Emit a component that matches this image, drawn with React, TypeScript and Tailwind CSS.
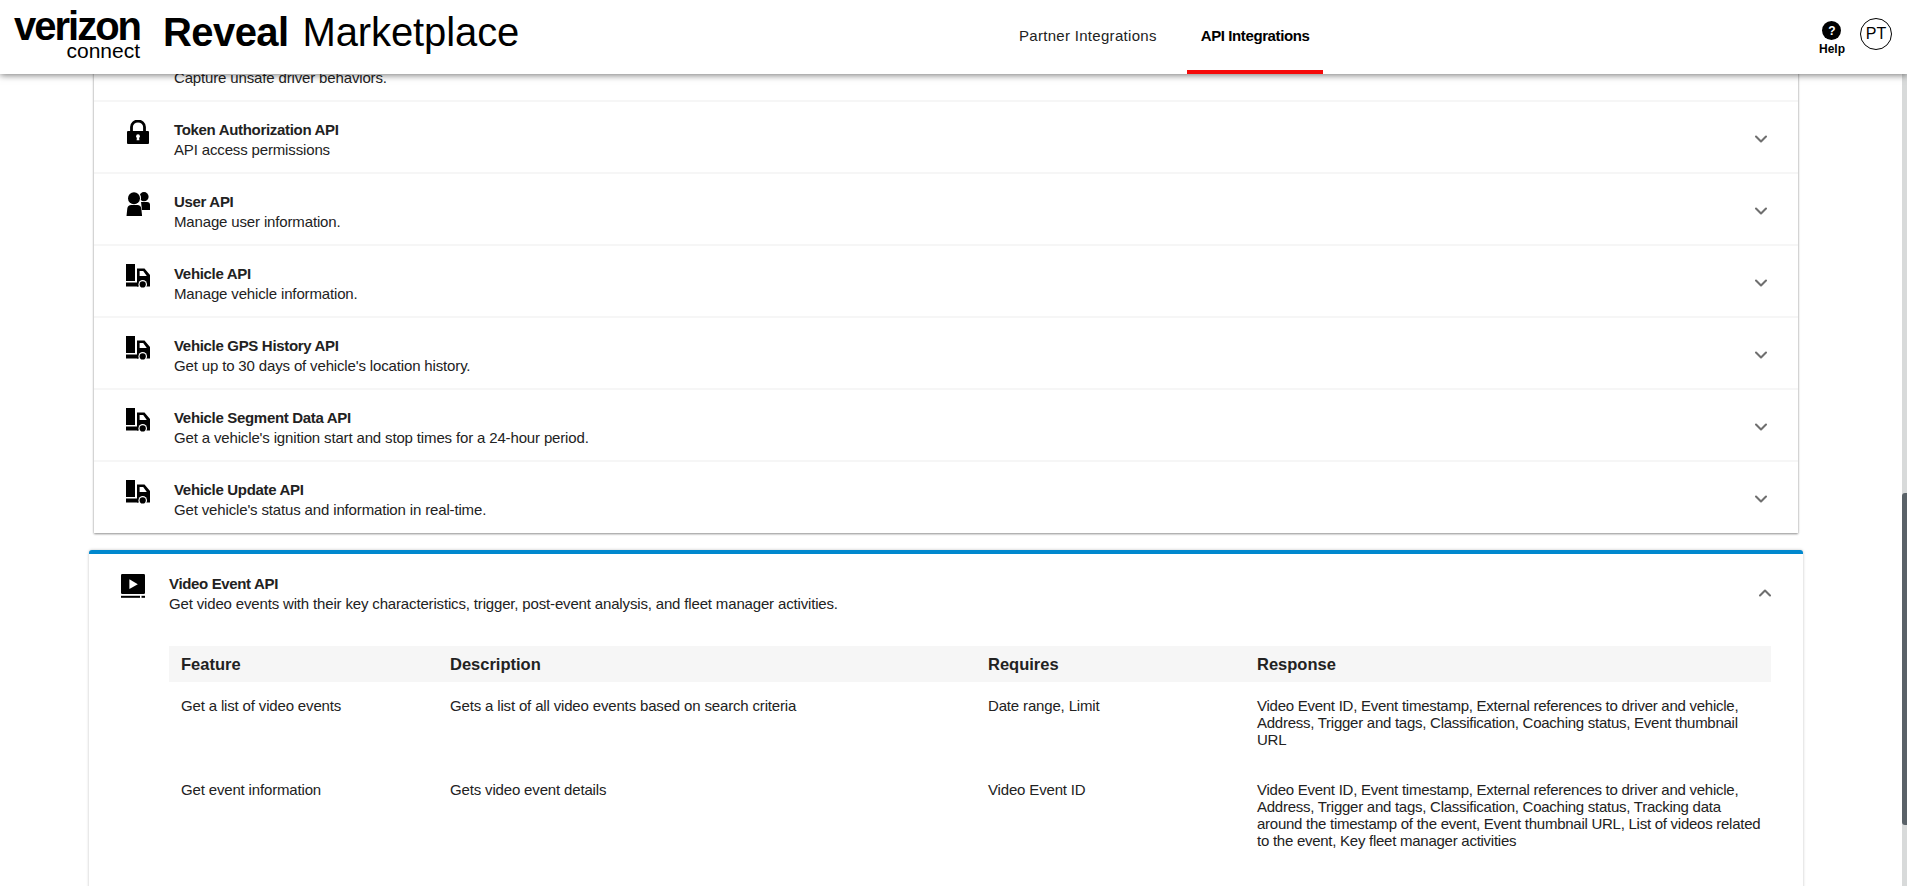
import React from 'react';
import { ChevronDown, ChevronUp } from 'lucide-react';

const LockIcon = () => (
  <svg viewBox="0 0 24 24" className="w-6 h-6" fill="black">
    <path d="M5.5 12V7a6.5 6 0 0 1 13 0V12" fill="none" stroke="black" strokeWidth="2.8" />
    <rect x="1" y="11" width="22" height="13" rx="1" />
    <circle cx="12" cy="16.2" r="1.9" fill="white" />
    <path d="M11 17h2l.4 3.2h-2.8z" fill="white" />
  </svg>
);

const UserIcon = () => (
  <svg viewBox="0 0 24 25" className="w-6 h-[25px] -mt-[1px]" fill="black">
    <circle cx="18" cy="5.7" r="4.6" />
    <path d="M15 11h6a3 3 0 0 1 3 3v5h-8z" />
    <circle cx="8" cy="7.3" r="7" fill="white" />
    <circle cx="8" cy="7.3" r="6" />
    <path d="M0.5 25l0.8-7.5a4 4 0 0 1 4-3.5h6a4 4 0 0 1 4 3.5l0.8 7.5z" />
  </svg>
);

const TruckIcon = () => (
  <svg viewBox="0 0 24 24" className="w-6 h-6" fill="black">
    <rect x="0" y="0" width="9" height="17" />
    <rect x="0" y="18.5" width="12" height="4" />
    <path
      fillRule="evenodd"
      d="M11 4.5h7.5l5.5 6.5v11.5H11zM13.6 7v5h7.2l-3.6-5z"
    />
    <circle cx="16.7" cy="20.4" r="4.3" fill="white" />
    <circle cx="16.7" cy="20.4" r="3.1" />
  </svg>
);

const VideoIcon = () => (
  <svg viewBox="0 0 24 24" className="w-6 h-6" fill="black">
    <rect x="0" y="0" width="24" height="20" rx="1.2" />
    <path d="M8.4 5.3L16.8 10.2L8.4 15z" fill="white" />
    <rect x="0" y="21.8" width="19" height="2" />
    <rect x="20.5" y="21.8" width="3.5" height="2" />
  </svg>
);

const apiRows = [
  { icon: <LockIcon />, name: 'Token Authorization API', desc: 'API access permissions' },
  { icon: <UserIcon />, name: 'User API', desc: 'Manage user information.' },
  { icon: <TruckIcon />, name: 'Vehicle API', desc: 'Manage vehicle information.' },
  { icon: <TruckIcon />, name: 'Vehicle GPS History API', desc: "Get up to 30 days of vehicle's location history." },
  { icon: <TruckIcon />, name: 'Vehicle Segment Data API', desc: "Get a vehicle's ignition start and stop times for a 24-hour period." },
  { icon: <TruckIcon />, name: 'Vehicle Update API', desc: "Get vehicle's status and information in real-time." },
];

const videoFeatures = [
  {
    feature: 'Get a list of video events',
    description: 'Gets a list of all video events based on search criteria',
    requires: 'Date range, Limit',
    response:
      'Video Event ID, Event timestamp, External references to driver and vehicle, Address, Trigger and tags, Classification, Coaching status, Event thumbnail URL',
  },
  {
    feature: 'Get event information',
    description: 'Gets video event details',
    requires: 'Video Event ID',
    response:
      'Video Event ID, Event timestamp, External references to driver and vehicle, Address, Trigger and tags, Classification, Coaching status, Tracking data around the timestamp of the event, Event thumbnail URL, List of videos related to the event, Key fleet manager activities',
  },
];

const App: React.FC = () => {
  return (
    <div className="h-[886px] w-full overflow-hidden flex flex-col bg-white text-[#222] font-['Liberation_Sans',Arial,sans-serif]">
      {/* Header */}
      <header className="relative z-10 h-[74px] shrink-0 flex bg-white shadow-[0_1px_7px_rgba(0,0,0,0.55)]">
        <div className="w-[1005px] shrink-0 flex items-start pl-[14px] text-black">
          <div className="flex flex-col items-end pt-[10px]">
            <span className="text-[40px] leading-[32px] font-bold tracking-[-2px]">verizon</span>
            <span className="text-[21px] leading-[18px]">connect</span>
          </div>
          <div className="ml-[23px] pt-[9px] text-[40px] leading-[46px] whitespace-nowrap">
            <span className="font-bold tracking-[-0.6px]">Reveal</span>
            <span className="ml-[14px] tracking-[-0.1px]">Marketplace</span>
          </div>
        </div>

        <nav className="flex text-[15px] gap-4">
          <a className="px-[14px] pt-[26px] leading-[20px] tracking-[0.3px] whitespace-nowrap">Partner Integrations</a>
          <a className="px-[14px] pt-[26px] leading-[20px] tracking-[-0.4px] font-bold whitespace-nowrap text-black border-b-4 border-[#f50a0a]">
            API Integrations
          </a>
        </nav>

        <div className="ml-auto flex items-start pr-[15px] pt-[18px] text-black">
          <div className="flex flex-col items-center mr-[15px] pt-[3px]">
            <div className="w-[19px] h-[19px] rounded-full bg-black flex items-center justify-center text-white text-[12px] leading-none font-bold">
              ?
            </div>
            <span className="text-[12px] leading-[16px] mt-[1px] font-bold">Help</span>
          </div>
          <div className="w-8 h-8 rounded-full border border-black flex items-center justify-center text-[16px]">
            PT
          </div>
        </div>
      </header>

      <div className="flex flex-1 min-h-0">
        <main className="flex-1 min-w-0 overflow-hidden pl-[89px] pr-[99px]">
          {/* API list */}
          <section className="mx-[5px] -mt-[6px] pb-[1px] bg-white shadow-[0_1px_2px_rgba(0,0,0,0.4),0_0_3px_rgba(0,0,0,0.12)]">
            <div className="pl-[80px] pb-[12px] text-[15px] leading-[20px] tracking-[-0.15px]">Capture unsafe driver behaviors.</div>
            {apiRows.map((row) => (
              <div key={row.name} className="h-[72px] flex items-center border-t-2 border-[#f6f6f6] pl-[32px] pr-[27px]">
                <div className="w-[24px] mr-[24px] self-start pt-[18px]">{row.icon}</div>
                <div className="self-start pt-[18px] flex-1 min-w-0 text-[15px] leading-[20px]">
                  <div className="font-bold tracking-[-0.32px]">{row.name}</div>
                  <div className="tracking-[-0.15px]">{row.desc}</div>
                </div>
                <ChevronDown size={20} strokeWidth={2.5} className="text-[#6f6f6f] mt-[4px]" />
              </div>
            ))}
          </section>

          {/* Open API card */}
          <section className="mt-[17px] bg-white border-t-4 border-[#0088ce] rounded-t-[3px] shadow-[0_0_3px_rgba(0,0,0,0.25)] pl-[32px] pr-[32px] pb-10">
            <div className="flex items-start pt-[20px]">
              <div className="w-[24px] mr-[24px]">
                <VideoIcon />
              </div>
              <div className="flex-1 text-[15px] leading-[20px]">
                <div className="font-bold tracking-[-0.35px]">Video Event API</div>
                <div className="tracking-[-0.16px]">Get video events with their key characteristics, trigger, post-event analysis, and fleet manager activities.</div>
              </div>
              <ChevronUp size={20} strokeWidth={2.5} className="text-[#6f6f6f] mt-[9px] -mr-[4px]" />
            </div>

            <table className="mt-[32px] ml-[48px] w-[1602px] table-fixed border-collapse text-left">
              <colgroup>
                <col className="w-[269px]" />
                <col className="w-[538px]" />
                <col className="w-[269px]" />
                <col className="w-[526px]" />
              </colgroup>
              <thead>
                <tr className="bg-[#f6f6f6] h-[36px] text-[16.5px] font-bold">
                  <th className="px-3">Feature</th>
                  <th className="px-3">Description</th>
                  <th className="px-3">Requires</th>
                  <th className="px-3">Response</th>
                </tr>
              </thead>
              <tbody className="text-[15px] leading-[17px] tracking-[-0.16px]">
                {videoFeatures.map((item) => (
                  <tr key={item.feature} className="align-top">
                    <td className="px-3 pt-[15px] pb-[18px]">{item.feature}</td>
                    <td className="px-3 pt-[15px] pb-[18px]">{item.description}</td>
                    <td className="px-3 pt-[15px] pb-[18px]">{item.requires}</td>
                    <td className="pl-3 pr-1 pt-[15px] pb-[18px] tracking-[-0.26px]">{item.response}</td>
                  </tr>
                ))}
              </tbody>
            </table>
          </section>
        </main>

        {/* Scrollbar */}
        <div className="w-[5px] shrink-0 bg-[#d8dada]">
          <div className="mt-[419px] h-[332px] bg-[#5a6268] rounded-tl-[3px] rounded-bl-[3px]" />
        </div>
      </div>
    </div>
  );
};

export default App;
